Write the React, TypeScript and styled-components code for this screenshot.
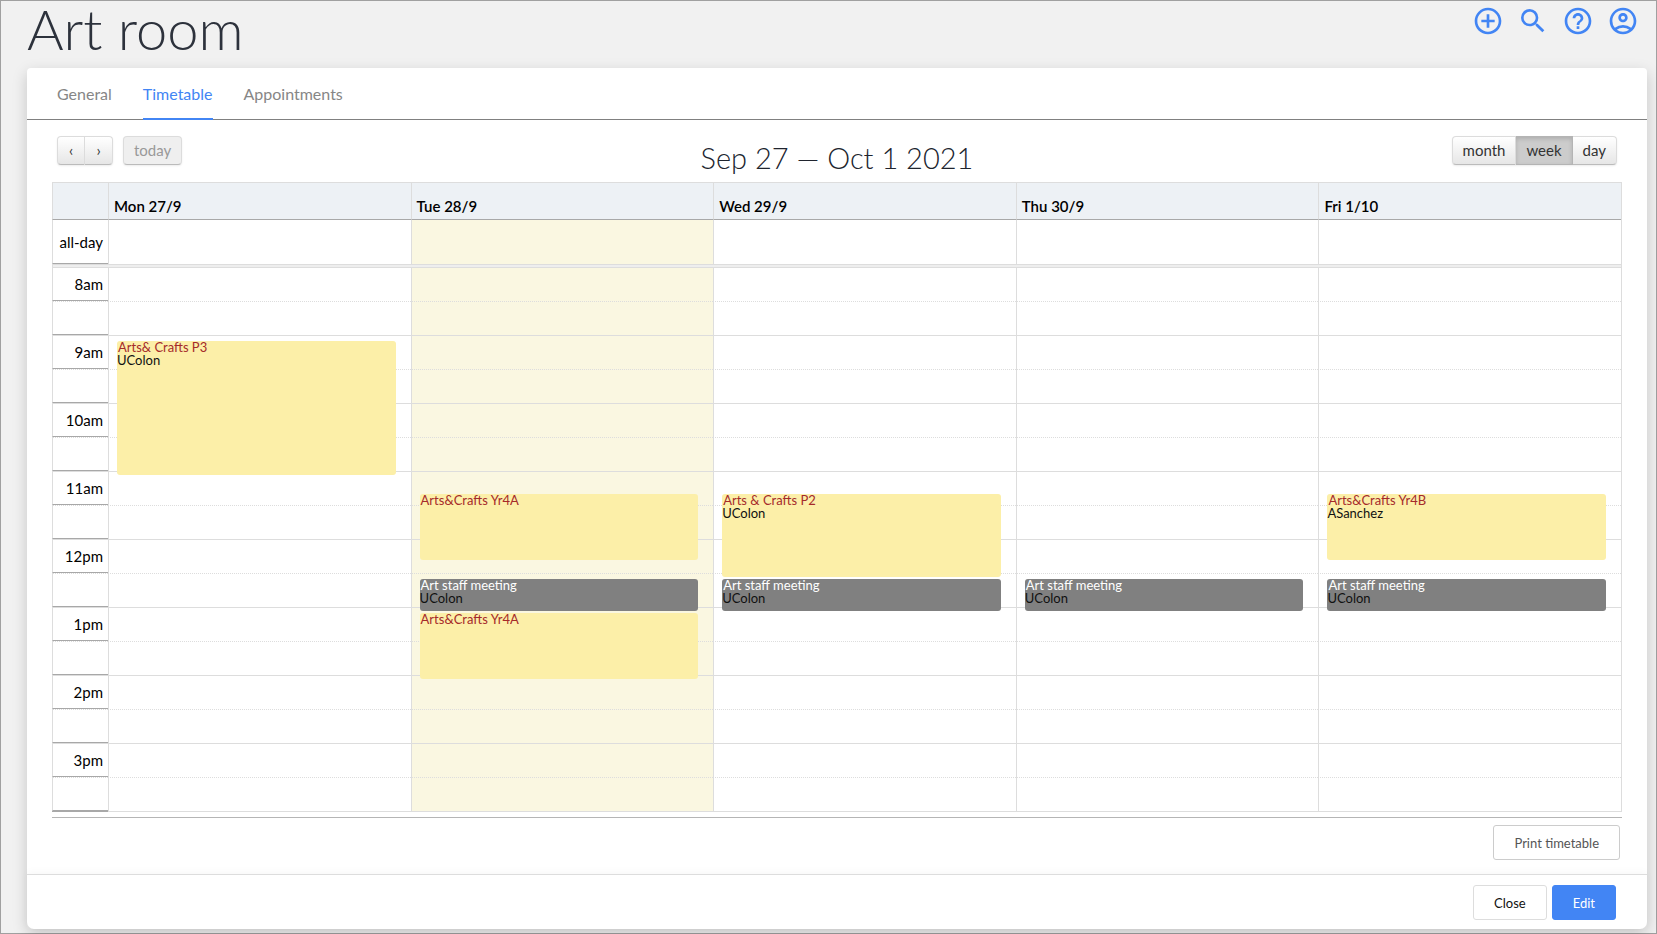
import React from "react";
import styled, { createGlobalStyle, css } from "styled-components";
import { MdAddCircleOutline, MdHelpOutline, MdOutlineAccountCircle, MdSearch } from "react-icons/md";

const AXIS_WIDTH = 56;
const SLOT_HEIGHT = 34;
const DAY_START = 8 * 60;
const SLOT_COUNT = 16;

const GlobalStyle = createGlobalStyle`
  *, *::before, *::after { box-sizing: border-box; }
  body { margin: 0; background: #f1f1f1; color: #000; font-family: Lato, "Liberation Sans", sans-serif; }
  button { font-family: inherit; cursor: pointer; }
  h1, h2 { margin: 0; }
`;

const Page = styled.div`
  min-height: 100vh;
  padding: 0 9px 4px 26px;
  border: 1px solid #a0a0a0;
`;

const PageHeader = styled.header`
  display: flex;
  justify-content: space-between;
  align-items: flex-start;
  height: 67px;
`;

const PageTitle = styled.h1`
  font-size: 56px;
  line-height: 56px;
  font-weight: 300;
  color: #2d323c;
`;

const HeaderActions = styled.nav`
  display: flex;
  gap: 13px;
  padding: 4px 8px 0 0;
`;

const IconButton = styled.button`
  display: flex;
  padding: 0;
  border: 0;
  background: none;
  color: #4285f4;
  font-size: 32px;
`;

const Card = styled.main`
  background: #fff;
  border-radius: 4px 4px 7px 7px;
  box-shadow: 0 5px 15px rgba(0, 0, 0, 0.18);
`;

const Tabs = styled.nav`
  display: flex;
  gap: 31px;
  height: 52px;
  padding: 0 30px;
  border-bottom: 1px solid #808080;
`;

const Tab = styled.a<{ $active?: boolean }>`
  height: 52px;
  border-bottom: 2px solid ${(p) => (p.$active ? "#4285f4" : "transparent")};
  color: ${(p) => (p.$active ? "#4285f4" : "#868686")};
  font-size: 16px;
  line-height: 51px;
  text-decoration: none;
`;

const Toolbar = styled.div`
  display: grid;
  grid-template-columns: 1fr auto 1fr;
  align-items: start;
  padding: 16px 30px 0;
  height: 62px;
`;

const ToolbarSide = styled.div<{ $end?: boolean }>`
  display: flex;
  gap: 10px;
  justify-content: ${(p) => (p.$end ? "flex-end" : "flex-start")};
`;

const RangeTitle = styled.h2`
  font-size: 29px;
  line-height: 43px;
  font-weight: 300;
  color: #20242e;
`;

const ButtonGroup = styled.div`
  display: flex;
  border-radius: 4px;
  box-shadow: 0 1px 2px rgba(0, 0, 0, 0.08);
`;

const ToolButton = styled.button<{ $active?: boolean }>`
  height: 29px;
  min-width: 28px;
  padding: 0 10px;
  border: 1px solid;
  border-color: #dcdcdc #dcdcdc #bbb;
  background: linear-gradient(#fff, #e6e6e6);
  color: #333;
  font-size: 15px;
  line-height: 27px;

  & + & { border-left-width: 0; }
  &:first-child { border-top-left-radius: 4px; border-bottom-left-radius: 4px; }
  &:last-child { border-top-right-radius: 4px; border-bottom-right-radius: 4px; }
  &:disabled { background: #efefef; color: #999; cursor: default; }

  ${(p) =>
    p.$active &&
    css`
      background: #ccc;
      border-color: #b4b4b4;
      box-shadow: inset 0 2px 4px rgba(0, 0, 0, 0.15);
    `}
`;

const Calendar = styled.section`
  margin: 0 25px;
  padding-bottom: 5px;
  border-bottom: 1px solid #b5b5b5;
`;

const CalendarTable = styled.table`
  width: 100%;
  table-layout: fixed;
  border-collapse: separate;
  border-spacing: 0;
  border-right: 1px solid #ddd;
  font-size: 15px;
  line-height: 18px;
`;

const AxisCol = styled.col`
  width: ${AXIS_WIDTH}px;
`;

const DayHead = styled.th`
  height: 38px;
  padding: 0 5px 4px;
  border: solid #ddd;
  border-width: 1px 0 1px 1px;
  border-bottom-color: #a8a8a8;
  background: #edf1f5;
  font-weight: 600;
  text-align: left;
  vertical-align: bottom;
`;

const AllDayLabel = styled.th`
  height: 44px;
  padding: 0 5px 0 0;
  border-left: 1px solid #ddd;
  border-bottom: 1px solid #a8a8a8;
  font-weight: 400;
  text-align: right;
`;

const DayCell = styled.td<{ $today?: boolean }>`
  padding: 0;
  border-left: 1px solid #ddd;
  background: ${(p) => (p.$today ? "#faf7e1" : "#fff")};
`;

const Divider = styled.div`
  height: 3px;
  border: solid #ddd;
  border-width: 1px 1px 0;
  background: #eee;
`;

const SlotArea = styled.div`
  position: relative;
`;

const SlotRow = styled.tr<{ $half: boolean }>`
  height: ${SLOT_HEIGHT}px;

  & > * { border-top: 1px ${(p) => (p.$half ? "dotted" : "solid")} #ddd; }
`;

const SlotAxis = styled.th`
  height: ${SLOT_HEIGHT}px;
  padding: 0 5px 0 0;
  border-left: 1px solid #ddd;
  border-bottom: 1px solid #a8a8a8;
  font-weight: 400;
  text-align: right;
`;

const SlotEnd = styled.div`
  display: flex;
  height: 1px;
  background: #ddd;

  &::before { content: ""; width: ${AXIS_WIDTH}px; background: #a8a8a8; }
`;

const EventLayer = styled.div`
  position: absolute;
  inset: 1px 1px 0 ${AXIS_WIDTH}px;
  display: grid;
  grid-template-columns: repeat(5, 1fr);
`;

const EventColumn = styled.div`
  position: relative;
  margin: 0 15px 0 9px;
`;

const EventBox = styled.article<{ $kind: Kind }>`
  position: absolute;
  left: 0;
  right: 0;
  border-radius: 3px;
  background: ${(p) => (p.$kind === "lesson" ? "#fcefa8" : "#808080")};
  color: ${(p) => (p.$kind === "lesson" ? "#a52a2a" : "#fff")};
  font-size: 13px;
  line-height: 13px;
`;

const EventTitle = styled.div`
  padding-left: 1px;
`;

const EventStaff = styled.div`
  color: #111;
`;

const PrintRow = styled.div`
  display: flex;
  justify-content: flex-end;
  padding: 7px 27px 14px;
`;

const Footer = styled.footer`
  display: flex;
  justify-content: flex-end;
  gap: 5px;
  padding: 10px 31px 9px;
  border-top: 1px solid #ddd;
  box-shadow: 0 -2px 8px rgba(0, 0, 0, 0.03);
`;

const ActionButton = styled.button<{ $tone?: "muted" | "primary" }>`
  height: 35px;
  padding: 0 20px;
  border: 1px solid ${(p) => (p.$tone === "primary" ? "#4285f4" : p.$tone === "muted" ? "#ccc" : "#ddd")};
  border-radius: 3px;
  background: ${(p) => (p.$tone === "primary" ? "#4285f4" : "#fff")};
  color: ${(p) => (p.$tone === "primary" ? "#fff" : p.$tone === "muted" ? "#555" : "#111")};
  font-size: 13px;
`;

type Kind = "lesson" | "meeting";

interface CalendarEvent {
  title: string;
  staff?: string;
  start: number;
  end: number;
  kind: Kind;
}

interface Day {
  label: string;
  today?: boolean;
  events: CalendarEvent[];
}

const at = (hour: number, minute: number) => hour * 60 + minute;

const staffMeeting: CalendarEvent = {
  title: "Art staff meeting",
  staff: "UColon",
  start: at(12, 35),
  end: at(13, 5),
  kind: "meeting",
};

const days: Day[] = [
  {
    label: "Mon 27/9",
    events: [{ title: "Arts& Crafts P3", staff: "UColon", start: at(9, 5), end: at(11, 5), kind: "lesson" }],
  },
  {
    label: "Tue 28/9",
    today: true,
    events: [
      { title: "Arts&Crafts Yr4A", start: at(11, 20), end: at(12, 20), kind: "lesson" },
      staffMeeting,
      { title: "Arts&Crafts Yr4A", start: at(13, 5), end: at(14, 5), kind: "lesson" },
    ],
  },
  {
    label: "Wed 29/9",
    events: [
      { title: "Arts & Crafts P2", staff: "UColon", start: at(11, 20), end: at(12, 35), kind: "lesson" },
      staffMeeting,
    ],
  },
  { label: "Thu 30/9", events: [staffMeeting] },
  {
    label: "Fri 1/10",
    events: [
      { title: "Arts&Crafts Yr4B", staff: "ASanchez", start: at(11, 20), end: at(12, 20), kind: "lesson" },
      staffMeeting,
    ],
  },
];

const offset = (minutes: number) => Math.floor((minutes * SLOT_HEIGHT) / 30);

const hourLabel = (slot: number) => {
  const hour = 8 + slot / 2;
  return hour < 12 ? `${hour}am` : `${hour === 12 ? 12 : hour - 12}pm`;
};

const Columns = () => (
  <colgroup>
    <AxisCol />
    {days.map((day) => (
      <col key={day.label} />
    ))}
  </colgroup>
);

export default function App() {
  return (
    <>
      <GlobalStyle />
      <Page>
        <PageHeader>
          <PageTitle>Art room</PageTitle>
          <HeaderActions aria-label="Account and tools">
            <IconButton aria-label="Add"><MdAddCircleOutline /></IconButton>
            <IconButton aria-label="Search"><MdSearch /></IconButton>
            <IconButton aria-label="Help"><MdHelpOutline /></IconButton>
            <IconButton aria-label="Account"><MdOutlineAccountCircle /></IconButton>
          </HeaderActions>
        </PageHeader>

        <Card>
          <Tabs aria-label="Room sections">
            <Tab href="#general">General</Tab>
            <Tab href="#timetable" $active aria-current="page">Timetable</Tab>
            <Tab href="#appointments">Appointments</Tab>
          </Tabs>

          <Toolbar>
            <ToolbarSide>
              <ButtonGroup>
                <ToolButton aria-label="Previous week">‹</ToolButton>
                <ToolButton aria-label="Next week">›</ToolButton>
              </ButtonGroup>
              <ButtonGroup>
                <ToolButton disabled>today</ToolButton>
              </ButtonGroup>
            </ToolbarSide>
            <RangeTitle>Sep 27 — Oct 1 2021</RangeTitle>
            <ToolbarSide $end>
              <ButtonGroup>
                <ToolButton>month</ToolButton>
                <ToolButton $active aria-pressed="true">week</ToolButton>
                <ToolButton>day</ToolButton>
              </ButtonGroup>
            </ToolbarSide>
          </Toolbar>

          <Calendar aria-label="Week timetable">
            <CalendarTable>
              <Columns />
              <thead>
                <tr>
                  <DayHead />
                  {days.map((day) => (
                    <DayHead key={day.label} scope="col">{day.label}</DayHead>
                  ))}
                </tr>
              </thead>
              <tbody>
                <tr>
                  <AllDayLabel scope="row">all-day</AllDayLabel>
                  {days.map((day) => (
                    <DayCell key={day.label} $today={day.today} />
                  ))}
                </tr>
              </tbody>
            </CalendarTable>
            <Divider />
            <SlotArea>
              <CalendarTable>
                <Columns />
                <tbody>
                  {Array.from({ length: SLOT_COUNT }, (_, slot) => (
                    <SlotRow key={slot} $half={slot % 2 === 1}>
                      <SlotAxis scope="row">{slot % 2 === 0 ? hourLabel(slot) : null}</SlotAxis>
                      {days.map((day) => (
                        <DayCell key={day.label} $today={day.today} />
                      ))}
                    </SlotRow>
                  ))}
                </tbody>
              </CalendarTable>
              <SlotEnd />
              <EventLayer>
                {days.map((day) => (
                  <EventColumn key={day.label}>
                    {day.events.map((event) => (
                      <EventBox
                        key={event.start}
                        $kind={event.kind}
                        style={{
                          top: offset(event.start - DAY_START),
                          height: offset(event.end - event.start) - 2,
                        }}
                      >
                        <EventTitle>{event.title}</EventTitle>
                        {event.staff && <EventStaff>{event.staff}</EventStaff>}
                      </EventBox>
                    ))}
                  </EventColumn>
                ))}
              </EventLayer>
            </SlotArea>
          </Calendar>

          <PrintRow>
            <ActionButton $tone="muted">Print timetable</ActionButton>
          </PrintRow>

          <Footer>
            <ActionButton>Close</ActionButton>
            <ActionButton $tone="primary">Edit</ActionButton>
          </Footer>
        </Card>
      </Page>
    </>
  );
}
